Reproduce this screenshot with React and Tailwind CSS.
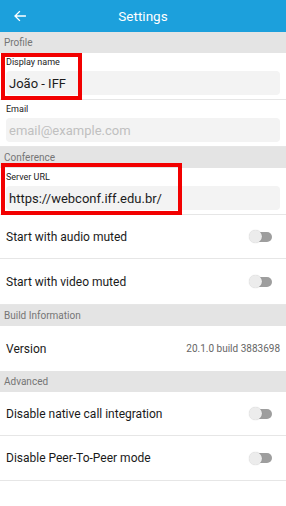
import React from "react";

function Section({ title }) {
  return (
    <div className="h-[21px] bg-[#e4e4e4] flex items-center px-[4px] text-[10px] text-[#757575]">
      {title}
    </div>
  );
}

function Field({ label, value, placeholder }) {
  return (
    <div className="border-b border-[#e6e6e6] px-[6px] pt-[4px] pb-[4px]">
      <div className="h-[12px] flex items-center text-[9px] text-[#222]">{label}</div>
      <div className="mt-[2px] h-[24px] rounded-[4px] bg-[#f3f3f3] flex items-center px-[3px] text-[13px] leading-none">
        {value ? (
          <span className="text-[#1c1c1c]">{value}</span>
        ) : (
          <span className="text-[#c0c0c0]">{placeholder}</span>
        )}
      </div>
    </div>
  );
}

function Toggle() {
  return (
    <div className="relative w-[24px] h-[14px] flex items-center">
      <div className="absolute right-[1px] w-[18px] h-[10px] rounded-full bg-[#9e9e9e]" />
      <div className="absolute left-[0px] w-[13px] h-[13px] rounded-full bg-[#ececec] shadow-[0_0_1px_rgba(0,0,0,0.25)]" />
    </div>
  );
}

function Row({ label, children, h = "h-[45px]" }) {
  return (
    <div className={`${h} border-b border-[#e6e6e6] flex items-center justify-between pl-[6px] pr-[13px] text-[12px] text-[#1a1a1a]`}>
      <span>{label}</span>
      {children}
    </div>
  );
}

export default function App() {
  return (
    <div
      className="relative w-[286px] h-[506px] bg-white overflow-hidden"
      style={{ fontFamily: "Roboto, 'Noto Sans', sans-serif" }}
    >
      <div className="h-[32px] bg-[#1ca0dc] flex items-center relative">
        <svg className="absolute left-[13px]" width="14" height="14" viewBox="0 0 24 24" fill="none" stroke="white" strokeWidth="2.4" strokeLinecap="square">
          <path d="M21 12H4M11 4.5L3.5 12l7.5 7.5" />
        </svg>
        <div className="w-full text-center text-white text-[13.5px]">Settings</div>
      </div>
      <Section title="Profile" />
      <Field label="Display name" value="João - IFF" />
      <Field label="Email" placeholder="email@example.com" />
      <Section title="Conference" />
      <Field label="Server URL" value="https://webconf.iff.edu.br/" />
      <Row label="Start with audio muted" h="h-[44px]"><Toggle /></Row>
      <Row label="Start with video muted" h="h-[46px]"><Toggle /></Row>
      <Section title="Build Information" />
      <div className="h-[45px] flex items-center justify-between pl-[6px] pr-[6px]">
        <span className="text-[12px] text-[#1a1a1a]">Version</span>
        <span className="text-[10px] text-[#666]">20.1.0 build 3883698</span>
      </div>
      <Section title="Advanced" />
      <Row label="Disable native call integration" h="h-[44px]"><Toggle /></Row>
      <Row label="Disable Peer-To-Peer mode"><Toggle /></Row>

      <div className="absolute left-[1px] top-[53px] w-[81px] h-[47px] border-4 border-[#f20000]" />
      <div className="absolute left-[1px] top-[163px] w-[181px] h-[52px] border-4 border-[#f20000]" />
    </div>
  );
}
